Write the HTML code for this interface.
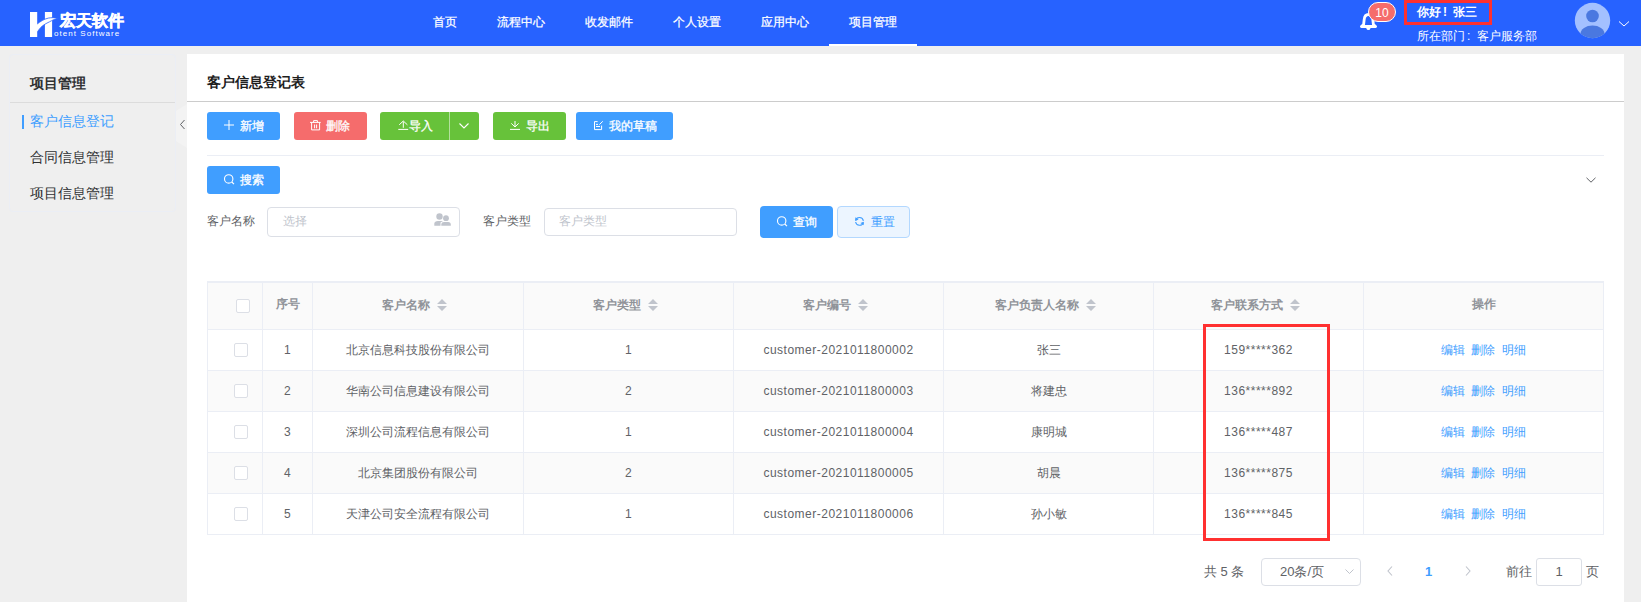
<!DOCTYPE html>
<html><head><meta charset="utf-8">
<style>
*{box-sizing:border-box;margin:0;padding:0}
html,body{width:1641px;height:602px;overflow:hidden}
body{background:#EFEFEF;font-family:"Liberation Sans",sans-serif;font-size:12px;color:#606266;position:relative}
.a{position:absolute;white-space:nowrap}
.nav{top:14px;height:16px;line-height:16px;color:#fff;font-size:12px;-webkit-text-stroke:0.25px #fff}
.btn{height:28px;border-radius:3px;color:#fff;font-size:12px}
.blue{background:#409EFF}.red{background:#F56C6C}.green{background:#67C23A}
.inp{border:1px solid #DCDFE6;border-radius:4px;background:#fff}
.ph{color:#C0C4CC}
.bt{color:#fff;line-height:14px;top:119px;-webkit-text-stroke:0.3px #fff}
.th{color:#909399;font-weight:bold;height:14px;line-height:14px;text-align:center}
.td{height:14px;line-height:14px;color:#606266;text-align:center}
.lat{letter-spacing:0.5px}
.cb{width:14px;height:14px;border:1px solid #DCDFE6;border-radius:2px;background:#fff}
.lnk{color:#409EFF}
svg.a{overflow:visible}
</style></head><body>
<div class="a" style="left:0;top:0;width:1641px;height:46px;background:#2762FF"></div>
<svg class="a" style="left:28px;top:10px" width="34" height="30" viewBox="28 10 34 30">
<rect x="44.9" y="12" width="7.2" height="25" fill="#fff"/>
<path d="M34 25.5 L37.2 24 C40 21.8 44 19 48.3 18.1 C51.5 17.5 54.5 17.6 57.8 18.2 C54.5 19 52.5 20.2 49.5 21.8 C46 23.5 43 25.2 41 27.2 C39.5 28.8 38.3 30.5 37.2 32 L34 33 Z" fill="#fff" stroke="#2762FF" stroke-width="0.8"/>
<rect x="30" y="12" width="7.2" height="25" fill="#fff"/>
</svg>
<div class="a" style="left:60px;top:12px;font-size:16px;line-height:18px;font-weight:bold;-webkit-text-stroke:0.5px #fff;color:#fff">宏天软件</div>
<div class="a" style="left:54px;top:30px;font-size:8px;line-height:8px;color:#fff;letter-spacing:1.05px">otent Software</div>
<div class="a nav" style="left:433px">首页</div>
<div class="a nav" style="left:497px">流程中心</div>
<div class="a nav" style="left:585px">收发邮件</div>
<div class="a nav" style="left:673px">个人设置</div>
<div class="a nav" style="left:761px">应用中心</div>
<div class="a nav" style="left:849px">项目管理</div>
<div class="a" style="left:829px;top:44px;width:88px;height:2px;background:#fff"></div>
<svg class="a" style="left:1356px;top:8px" width="24" height="26" viewBox="0 0 24 26">
<path d="M7.6 16.5 L8.2 11.5 C8.5 8.5 10 6.5 12.5 6.5 C15 6.5 16.5 8.5 16.8 11.5 L17.4 16.5 L19.6 18.5 L5.4 18.5 Z" fill="none" stroke="#fff" stroke-width="2.8" stroke-linejoin="round"/>
<circle cx="12.4" cy="20.2" r="1.9" fill="#fff"/>
</svg>
<div class="a" style="left:1368px;top:2px;width:28px;height:20px;border-radius:10px;background:#F56C6C;border:1px solid #fff;color:#fff;font-size:12px;line-height:20px;text-align:center">10</div>
<div class="a" style="left:1404px;top:0px;width:88px;height:25px;border:3px solid #FF3030"></div>
<div class="a" style="left:1417px;top:5px;font-size:12px;line-height:14px;font-weight:bold;color:#fff">你好<span style="display:inline-block;width:12px;padding-left:2px">!</span>张三</div>
<div class="a" style="left:1417px;top:29px;font-size:12px;line-height:14px;color:#fff">所在部门<span style="display:inline-block;width:12px;padding-left:2px">:</span>客户服务部</div>
<svg class="a" style="left:1574px;top:2px" width="37" height="37" viewBox="0 0 37 37">
<defs><clipPath id="cc"><circle cx="18.5" cy="18.5" r="17.7"/></clipPath></defs>
<circle cx="18.5" cy="18.5" r="17.7" fill="#A3C0FF"/>
<g clip-path="url(#cc)"><circle cx="18.5" cy="14" r="6.3" fill="#4A78E0"/><ellipse cx="18.5" cy="32" rx="12" ry="8.5" fill="#4A78E0"/></g>
</svg>
<svg class="a" style="left:1618px;top:20px" width="12" height="8" viewBox="0 0 12 8"><path d="M1 1.5 L6 6 L11 1.5" fill="none" stroke="#fff" stroke-width="1"/></svg>
<div class="a" style="left:9px;top:54px;width:167px;height:158px;border:1px solid #EBEEF5;border-radius:4px"></div>
<div class="a" style="left:10px;top:102px;width:165px;height:1px;background:#DCDCDC"></div>
<div class="a" style="left:30px;top:75px;font-size:14px;line-height:16px;font-weight:bold;color:#303133">项目管理</div>
<div class="a" style="left:22px;top:115px;width:2px;height:14px;background:#409EFF"></div>
<div class="a" style="left:30px;top:113px;font-size:14px;line-height:16px;color:#409EFF">客户信息登记</div>
<div class="a" style="left:30px;top:149px;font-size:14px;line-height:16px;color:#303133">合同信息管理</div>
<div class="a" style="left:30px;top:185px;font-size:14px;line-height:16px;color:#303133">项目信息管理</div>
<svg class="a" style="left:176px;top:104px" width="11" height="44" viewBox="0 0 11 44"><path d="M0 7 L11 0 L11 44 L0 37 Z" fill="#F3F3F3"/><path d="M8.5 16 L4.5 20.5 L8.5 25" fill="none" stroke="#606266" stroke-width="1"/></svg>
<div class="a" style="left:187px;top:54px;width:1437px;height:548px;background:#fff"></div>
<div class="a" style="left:207px;top:74px;font-size:14px;line-height:16px;font-weight:bold;color:#1E1E1E">客户信息登记表</div>
<div class="a" style="left:187px;top:101px;width:1437px;height:1px;background:#CCCCCC"></div>
<div class="a btn blue" style="left:207px;top:112px;width:73px"></div>
<svg class="a" style="left:224px;top:120px" width="10" height="10" viewBox="0 0 10 10"><path d="M5 0V10M0 5H10" stroke="#fff" stroke-width="1"/></svg>
<div class="a bt" style="left:240px">新增</div>
<div class="a btn red" style="left:294px;top:112px;width:73px"></div>
<svg class="a" style="left:308px;top:118px" width="15" height="15" viewBox="308 118 15 15"><path d="M310 122.4H320.7M313.6 122.4V120.6H317.4V122.4M311.6 122.4V129.9H319.6V122.4M314.6 124.5V128.3M316.6 124.5V128.3" fill="none" stroke="#fff" stroke-width="1"/></svg>
<div class="a bt" style="left:326px">删除</div>
<div class="a btn green" style="left:380px;top:112px;width:99px"></div>
<div class="a" style="left:449px;top:112px;width:1px;height:28px;background:rgba(255,255,255,0.5)"></div>
<svg class="a" style="left:396px;top:118px" width="14" height="14" viewBox="396 118 14 14"><path d="M403.3 121.5V127.8M399.2 124.8L403.3 121L407.4 124.8M398.3 129.4H408.2" fill="none" stroke="#fff" stroke-width="1"/></svg>
<div class="a bt" style="left:409px">导入</div>
<svg class="a" style="left:459px;top:123px" width="10" height="6" viewBox="0 0 10 6"><path d="M0.5 0.5L5 5L9.5 0.5" fill="none" stroke="#fff" stroke-width="1.1"/></svg>
<div class="a btn green" style="left:493px;top:112px;width:73px"></div>
<svg class="a" style="left:508px;top:118px" width="14" height="14" viewBox="508 118 14 14"><path d="M515 121V126.5M511.3 123.4L515 127L518.7 123.4M510 129.4H520" fill="none" stroke="#fff" stroke-width="1"/></svg>
<div class="a bt" style="left:526px">导出</div>
<div class="a btn blue" style="left:576px;top:112px;width:97px"></div>
<svg class="a" style="left:592px;top:118px" width="14" height="14" viewBox="592 118 14 14"><path d="M597.6 121.6H594.5V129.6H601.6V125.6M596 124.4H598M596 126.5H600M599.4 124.6L602.8 121.3" fill="none" stroke="#fff" stroke-width="1"/></svg>
<div class="a bt" style="left:609px">我的草稿</div>
<div class="a" style="left:207px;top:155px;width:1397px;height:1px;background:#EBEEF5"></div>
<div class="a btn blue" style="left:207px;top:166px;width:73px"></div>
<svg class="a" style="left:222px;top:172px" width="14" height="14" viewBox="222 172 14 14"><circle cx="228.7" cy="178.9" r="4.2" fill="none" stroke="#fff" stroke-width="1.1"/><path d="M231.8 182L234 184.2" stroke="#fff" stroke-width="1.1"/></svg>
<div class="a bt" style="left:240px;top:173px">搜索</div>
<svg class="a" style="left:1586px;top:177px" width="10" height="6" viewBox="0 0 10 6"><path d="M0.5 0.8L5 5.2L9.5 0.8" fill="none" stroke="#606266" stroke-width="1"/></svg>
<div class="a" style="left:207px;top:214px;line-height:14px">客户名称</div>
<div class="a inp" style="left:267px;top:207px;width:193px;height:30px"></div>
<div class="a ph" style="left:283px;top:214px;line-height:14px">选择</div>
<svg class="a" style="left:432px;top:210px" width="22" height="20" viewBox="432 210 22 20"><circle cx="439.5" cy="216.5" r="3.2" fill="#C0C4CC"/><path d="M434.3 225.8V223.5Q434.5 221 438 221H443L440.5 222.5V225.8Z" fill="#C0C4CC"/><circle cx="446" cy="218.2" r="2.9" fill="#C0C4CC"/><path d="M441.3 225.8V224Q441.5 222 444 222H448.2Q450.8 222 450.8 224.5V225.8Z" fill="#C0C4CC"/></svg>
<div class="a" style="left:483px;top:214px;line-height:14px">客户类型</div>
<div class="a inp" style="left:544px;top:208px;width:193px;height:28px"></div>
<div class="a ph" style="left:559px;top:214px;line-height:14px">客户类型</div>
<div class="a" style="left:760px;top:206px;width:73px;height:32px;background:#409EFF;border-radius:4px"></div>
<svg class="a" style="left:774px;top:214px" width="16" height="16" viewBox="774 214 16 16"><circle cx="781.7" cy="220.9" r="4.2" fill="none" stroke="#fff" stroke-width="1.1"/><path d="M784.8 224L787 226.2" stroke="#fff" stroke-width="1.1"/></svg>
<div class="a" style="left:793px;top:215px;line-height:14px;color:#fff;-webkit-text-stroke:0.3px #fff">查询</div>
<div class="a" style="left:837px;top:206px;width:73px;height:32px;background:#ECF5FF;border:1px solid #B3D8FF;border-radius:4px"></div>
<svg class="a" style="left:852px;top:214px" width="16" height="16" viewBox="852 214 16 16"><path d="M855.6 220.5A4 4 0 0 1 863.4 220.8M863.4 222.3A4 4 0 0 1 855.6 222" fill="none" stroke="#409EFF" stroke-width="1.1"/><path d="M855.3 217.3L858.6 219.6L855.3 220.9Z M863.7 225.3L860.4 223L863.7 221.7Z" fill="#409EFF"/></svg>
<div class="a" style="left:871px;top:215px;line-height:14px;color:#409EFF">重置</div>
<div class="a" style="left:207px;top:281px;width:1397px;height:254px;border:1px solid #EBEEF5;background:#fff"></div>
<div class="a" style="left:208px;top:282px;width:1395px;height:47px;background:#FAFAFA;border-top:1px solid #EBEEF5"></div>
<div class="a" style="left:208px;top:329px;width:1395px;height:1px;background:#EBEEF5"></div>
<div class="a" style="left:208px;top:371px;width:1395px;height:40px;background:#FAFAFA"></div>
<div class="a" style="left:208px;top:370px;width:1395px;height:1px;background:#EBEEF5"></div>
<div class="a" style="left:208px;top:411px;width:1395px;height:1px;background:#EBEEF5"></div>
<div class="a" style="left:208px;top:453px;width:1395px;height:40px;background:#FAFAFA"></div>
<div class="a" style="left:208px;top:452px;width:1395px;height:1px;background:#EBEEF5"></div>
<div class="a" style="left:208px;top:493px;width:1395px;height:1px;background:#EBEEF5"></div>
<div class="a" style="left:262px;top:282px;width:1px;height:252px;background:#EBEEF5"></div>
<div class="a" style="left:312px;top:282px;width:1px;height:252px;background:#EBEEF5"></div>
<div class="a" style="left:523px;top:282px;width:1px;height:252px;background:#EBEEF5"></div>
<div class="a" style="left:733px;top:282px;width:1px;height:252px;background:#EBEEF5"></div>
<div class="a" style="left:943px;top:282px;width:1px;height:252px;background:#EBEEF5"></div>
<div class="a" style="left:1153px;top:282px;width:1px;height:252px;background:#EBEEF5"></div>
<div class="a" style="left:1363px;top:282px;width:1px;height:252px;background:#EBEEF5"></div>
<div class="a cb" style="left:236px;top:299px"></div>
<div class="a th" style="left:263px;width:49px;top:297px">序号</div>
<div class="a th" style="left:313px;width:210px;top:297px"><span style="display:inline-block;width:72px;text-align:left">客户名称<svg style="position:relative;left:7px;top:2px" width="10" height="12" viewBox="0 0 10 12"><path d="M0 5L5 0L10 5Z M0 7L5 12L10 7Z" fill="#C0C4CC"/></svg></span></div>
<div class="a th" style="left:524px;width:209px;top:297px"><span style="display:inline-block;width:72px;text-align:left">客户类型<svg style="position:relative;left:7px;top:2px" width="10" height="12" viewBox="0 0 10 12"><path d="M0 5L5 0L10 5Z M0 7L5 12L10 7Z" fill="#C0C4CC"/></svg></span></div>
<div class="a th" style="left:734px;width:209px;top:297px"><span style="display:inline-block;width:72px;text-align:left">客户编号<svg style="position:relative;left:7px;top:2px" width="10" height="12" viewBox="0 0 10 12"><path d="M0 5L5 0L10 5Z M0 7L5 12L10 7Z" fill="#C0C4CC"/></svg></span></div>
<div class="a th" style="left:944px;width:209px;top:297px"><span style="display:inline-block;width:108px;text-align:left">客户负责人名称<svg style="position:relative;left:7px;top:2px" width="10" height="12" viewBox="0 0 10 12"><path d="M0 5L5 0L10 5Z M0 7L5 12L10 7Z" fill="#C0C4CC"/></svg></span></div>
<div class="a th" style="left:1154px;width:209px;top:297px"><span style="display:inline-block;width:96px;text-align:left">客户联系方式<svg style="position:relative;left:7px;top:2px" width="10" height="12" viewBox="0 0 10 12"><path d="M0 5L5 0L10 5Z M0 7L5 12L10 7Z" fill="#C0C4CC"/></svg></span></div>
<div class="a th" style="left:1364px;width:239px;top:297px">操作</div>
<div class="a cb" style="left:234px;top:343px"></div>
<div class="a td lat" style="left:263px;width:49px;top:343px">1</div>
<div class="a td" style="left:313px;width:210px;top:343px">北京信息科技股份有限公司</div>
<div class="a td lat" style="left:524px;width:209px;top:343px">1</div>
<div class="a td lat" style="left:734px;width:209px;top:343px">customer-2021011800002</div>
<div class="a td" style="left:944px;width:209px;top:343px">张三</div>
<div class="a td lat" style="left:1154px;width:209px;top:343px">159*****362</div>
<div class="a td lnk" style="left:1364px;width:239px;top:343px">编辑&nbsp;&nbsp;删除&nbsp;&nbsp;明细</div>
<div class="a cb" style="left:234px;top:384px"></div>
<div class="a td lat" style="left:263px;width:49px;top:384px">2</div>
<div class="a td" style="left:313px;width:210px;top:384px">华南公司信息建设有限公司</div>
<div class="a td lat" style="left:524px;width:209px;top:384px">2</div>
<div class="a td lat" style="left:734px;width:209px;top:384px">customer-2021011800003</div>
<div class="a td" style="left:944px;width:209px;top:384px">将建忠</div>
<div class="a td lat" style="left:1154px;width:209px;top:384px">136*****892</div>
<div class="a td lnk" style="left:1364px;width:239px;top:384px">编辑&nbsp;&nbsp;删除&nbsp;&nbsp;明细</div>
<div class="a cb" style="left:234px;top:425px"></div>
<div class="a td lat" style="left:263px;width:49px;top:425px">3</div>
<div class="a td" style="left:313px;width:210px;top:425px">深圳公司流程信息有限公司</div>
<div class="a td lat" style="left:524px;width:209px;top:425px">1</div>
<div class="a td lat" style="left:734px;width:209px;top:425px">customer-2021011800004</div>
<div class="a td" style="left:944px;width:209px;top:425px">康明城</div>
<div class="a td lat" style="left:1154px;width:209px;top:425px">136*****487</div>
<div class="a td lnk" style="left:1364px;width:239px;top:425px">编辑&nbsp;&nbsp;删除&nbsp;&nbsp;明细</div>
<div class="a cb" style="left:234px;top:466px"></div>
<div class="a td lat" style="left:263px;width:49px;top:466px">4</div>
<div class="a td" style="left:313px;width:210px;top:466px">北京集团股份有限公司</div>
<div class="a td lat" style="left:524px;width:209px;top:466px">2</div>
<div class="a td lat" style="left:734px;width:209px;top:466px">customer-2021011800005</div>
<div class="a td" style="left:944px;width:209px;top:466px">胡晨</div>
<div class="a td lat" style="left:1154px;width:209px;top:466px">136*****875</div>
<div class="a td lnk" style="left:1364px;width:239px;top:466px">编辑&nbsp;&nbsp;删除&nbsp;&nbsp;明细</div>
<div class="a cb" style="left:234px;top:507px"></div>
<div class="a td lat" style="left:263px;width:49px;top:507px">5</div>
<div class="a td" style="left:313px;width:210px;top:507px">天津公司安全流程有限公司</div>
<div class="a td lat" style="left:524px;width:209px;top:507px">1</div>
<div class="a td lat" style="left:734px;width:209px;top:507px">customer-2021011800006</div>
<div class="a td" style="left:944px;width:209px;top:507px">孙小敏</div>
<div class="a td lat" style="left:1154px;width:209px;top:507px">136*****845</div>
<div class="a td lnk" style="left:1364px;width:239px;top:507px">编辑&nbsp;&nbsp;删除&nbsp;&nbsp;明细</div>
<div class="a" style="left:1204px;top:564px;font-size:13px;line-height:15px">共 5 条</div>
<div class="a inp" style="left:1261px;top:558px;width:100px;height:28px"></div>
<div class="a" style="left:1280px;top:564px;font-size:13px;line-height:15px">20条/页</div>
<svg class="a" style="left:1345px;top:569px" width="9" height="6" viewBox="0 0 9 6"><path d="M0.5 0.5L4.5 4.5L8.5 0.5" fill="none" stroke="#C0C4CC" stroke-width="1"/></svg>
<svg class="a" style="left:1386px;top:566px" width="8" height="10" viewBox="0 0 8 10"><path d="M6 0.5L2 5L6 9.5" fill="none" stroke="#C0C4CC" stroke-width="1.1"/></svg>
<div class="a" style="left:1425px;top:564px;font-size:13px;line-height:15px;color:#409EFF;font-weight:bold">1</div>
<svg class="a" style="left:1464px;top:566px" width="8" height="10" viewBox="0 0 8 10"><path d="M2 0.5L6 5L2 9.5" fill="none" stroke="#C0C4CC" stroke-width="1.1"/></svg>
<div class="a" style="left:1506px;top:564px;font-size:13px;line-height:15px">前往</div>
<div class="a" style="left:1536px;top:558px;width:46px;height:28px;border:1px solid #DCDFE6;border-radius:3px;text-align:center;font-size:13px;line-height:26px">1</div>
<div class="a" style="left:1586px;top:564px;font-size:13px;line-height:15px">页</div>
<div class="a" style="left:1203px;top:324px;width:127px;height:217px;border:3px solid #FF3030"></div>
<div class="a" style="left:1624px;top:54px;width:17px;height:548px;background:#EFEFEF"></div>
</body></html>
